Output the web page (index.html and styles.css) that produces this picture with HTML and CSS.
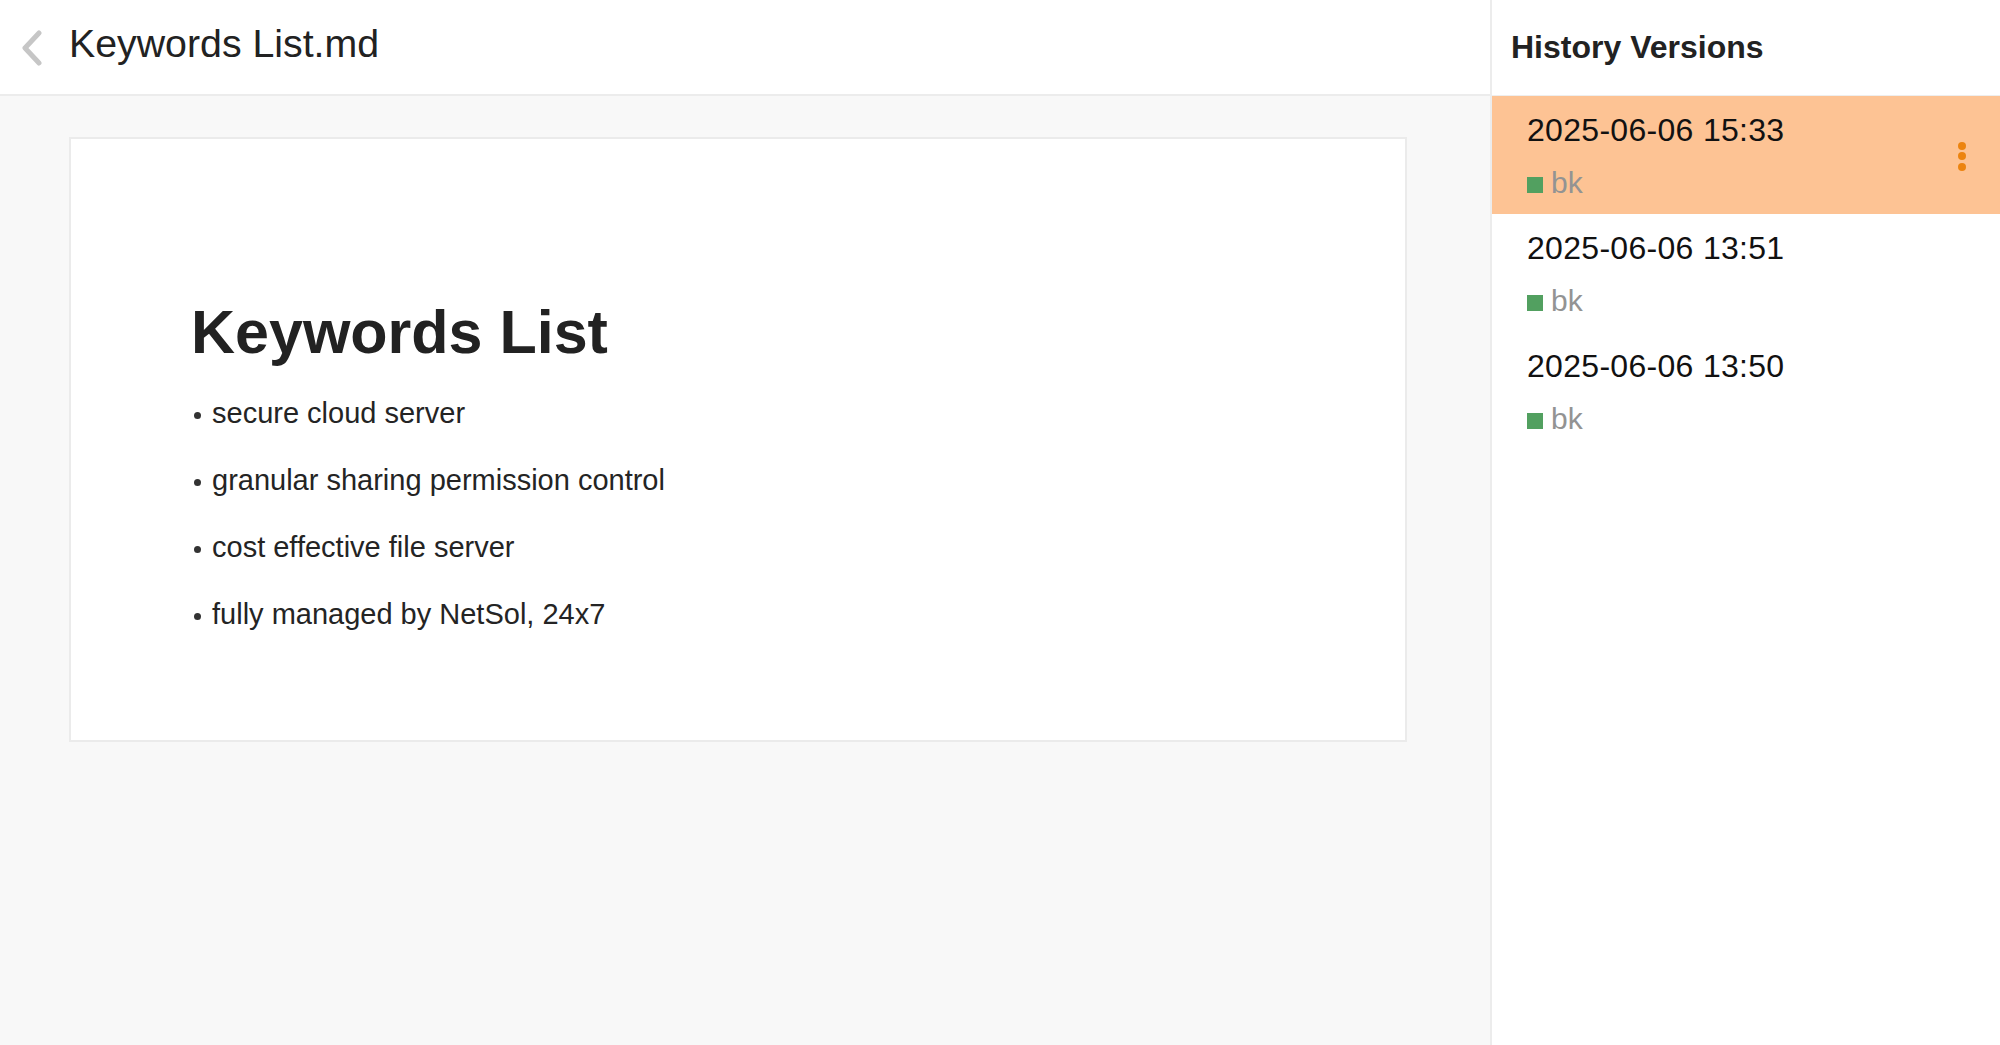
FILE: index.html
```html
<!DOCTYPE html>
<html lang="en">
<head>
    <meta charset="UTF-8">
    <meta name="viewport" content="width=device-width, initial-scale=1.0">
    <title>Keywords List.md - History Versions</title>
    <link rel="stylesheet" href="styles.css">
</head>
<body>
    <div class="main">
        <div class="topbar">
            <a class="back" href="#">
                <svg width="22" height="36" viewBox="0 0 22 36">
                    <path d="M18 3 L4 18 L18 33" fill="none" stroke="#c6c6c6" stroke-width="5" stroke-linecap="round" stroke-linejoin="round"/>
                </svg>
            </a>
            <h2 class="file-name">Keywords List.md</h2>
        </div>
        <div class="content">
            <div class="doc">
                <h1>Keywords List</h1>
                <ul class="keywords">
                    <li>secure cloud server</li>
                    <li>granular sharing permission control</li>
                    <li>cost effective file server</li>
                    <li>fully managed by NetSol, 24x7</li>
                </ul>
            </div>
        </div>
    </div>

    <div class="sidebar">
        <div class="sidebar-head">History Versions</div>
        <div class="version active">
            <div>
                <div class="time">2025-06-06 15:33</div>
                <div class="author"><span class="swatch"></span>bk</div>
            </div>
            <div class="more"><span></span><span></span><span></span></div>
        </div>
        <div class="version">
            <div>
                <div class="time">2025-06-06 13:51</div>
                <div class="author"><span class="swatch"></span>bk</div>
            </div>
        </div>
        <div class="version">
            <div>
                <div class="time">2025-06-06 13:50</div>
                <div class="author"><span class="swatch"></span>bk</div>
            </div>
        </div>
    </div>
</body>
</html>
```

FILE: styles.css
```css
* {
    box-sizing: border-box;
}
body {
    font-family: 'Liberation Sans', Arial, sans-serif;
    margin: 0;
    padding: 0;
    display: flex;
    height: 100vh;
    overflow: hidden;
    color: #222;
    background: #fff;
}
.main {
    flex: 1;
    display: flex;
    flex-direction: column;
    background: #f8f8f8;
}
.topbar {
    height: 96px;
    display: flex;
    align-items: center;
    padding: 0 0 7px 21px;
    background: white;
    border-bottom: 2px solid #ececec;
}
.back {
    display: flex;
    margin-top: 8px;
}
.file-name {
    margin: 0 0 0 26px;
    font-size: 39.3px;
    font-weight: normal;
    line-height: 1.2;
    color: #222;
}
.content {
    flex: 1;
    padding: 41px 83px 0 69px;
}
.doc {
    height: 605px;
    background: white;
    border: 2px solid #ebebeb;
    padding: 157px 0 0 120px;
}
h1 {
    margin: 0;
    font-size: 61px;
    line-height: 72px;
    font-weight: bold;
    color: #222;
}
.keywords {
    list-style: none;
    margin: 12px 0 0;
    padding: 0 0 0 3px;
}
.keywords li {
    font-size: 29px;
    line-height: 67px;
    color: #242424;
}
.keywords li::before {
    content: "";
    display: inline-block;
    width: 7px;
    height: 7px;
    border-radius: 50%;
    background: #333;
    margin: 0 11px 0 0;
    vertical-align: middle;
}
.sidebar {
    width: 510px;
    border-left: 2px solid #ececec;
    background: white;
}
.sidebar-head {
    height: 96px;
    display: flex;
    align-items: center;
    padding-left: 19px;
    font-size: 32px;
    font-weight: bold;
    color: #222;
    border-bottom: 1px solid #eeeeee;
}
.version {
    height: 118px;
    display: flex;
    justify-content: space-between;
    align-items: center;
    padding: 2px 34px 0 35px;
}
.version.active {
    background: #fdc394;
}
.time {
    font-size: 32px;
    line-height: 38px;
    letter-spacing: 0.3px;
    color: #111;
}
.author {
    margin-top: 16px;
    font-size: 30px;
    line-height: 36px;
    color: #939393;
}
.swatch {
    display: inline-block;
    width: 16px;
    height: 16px;
    background: #52a060;
    margin-right: 8px;
}
.more {
    display: flex;
    flex-direction: column;
    gap: 2.5px;
}
.more span {
    width: 8px;
    height: 8px;
    border-radius: 50%;
    background: #ec8410;
}
```
